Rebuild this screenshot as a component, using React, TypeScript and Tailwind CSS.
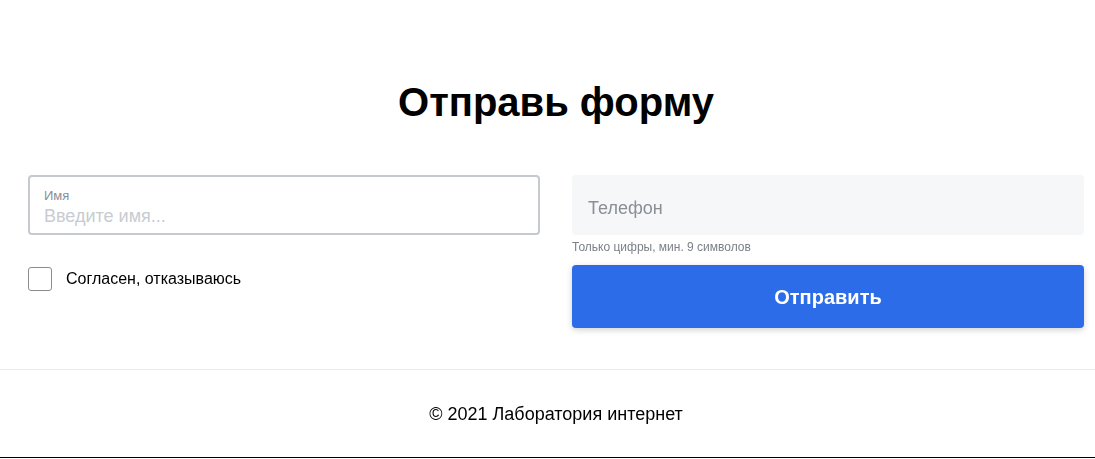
export default function App() {
  return (
    <div className="min-h-[459px] bg-white text-black [font-family:'Liberation_Sans',Arial,sans-serif]">
      <main className="pl-[28px] pr-[11px] pt-[78px]">
        <h1 className="text-center text-[40px] font-bold leading-[48px]">Отправь форму</h1>
        <form className="mt-[49px] grid grid-cols-2 gap-x-[32px]" onSubmit={(e) => e.preventDefault()}>
          <div className="flex flex-col">
            <label className="flex h-[60px] flex-col justify-center rounded-[4px] border-2 border-[#c6c9ce] px-[14px] pt-[4px]">
              <span className="text-[13px] leading-[16px] text-[#8a8f96]">Имя</span>
              <input
                autoFocus
                placeholder="Введите имя..."
                className="mt-[1px] h-[22px] bg-transparent text-[18px] leading-[22px] outline-none placeholder:text-[#c8ccd2]"
              />
            </label>
            <label className="mt-[32px] flex items-center gap-[14px]">
              <span className="size-[24px] rounded-[3px] border border-[#8c8c8c] bg-white" />
              <span className="text-[16px] leading-[20px]">Согласен, отказываюсь</span>
            </label>
          </div>
          <div className="flex flex-col">
            <input
              placeholder="Телефон"
              className="h-[60px] rounded-[4px] bg-[#f6f7f9] px-[16px] pt-[6px] text-[18px] outline-none placeholder:text-[#8a8f96]"
            />
            <p className="mt-[6px] text-[12px] leading-[12px] text-[#7c8087]">Только цифры, мин. 9 символов</p>
            <button
              type="submit"
              className="mt-[12px] h-[63px] rounded-[4px] bg-[#2d6ce8] text-[20px] font-bold text-white shadow-[0_2px_6px_rgba(0,0,0,0.18)]"
            >
              Отправить
            </button>
          </div>
        </form>
      </main>
      <footer className="mt-[41px] flex h-[89px] items-center justify-center border-t border-b border-t-[#ececec] border-b-black pl-[28px] pr-[11px] pt-[2px]">
        <span className="text-[18px]">© 2021 Лаборатория интернет</span>
      </footer>
    </div>
  );
}
